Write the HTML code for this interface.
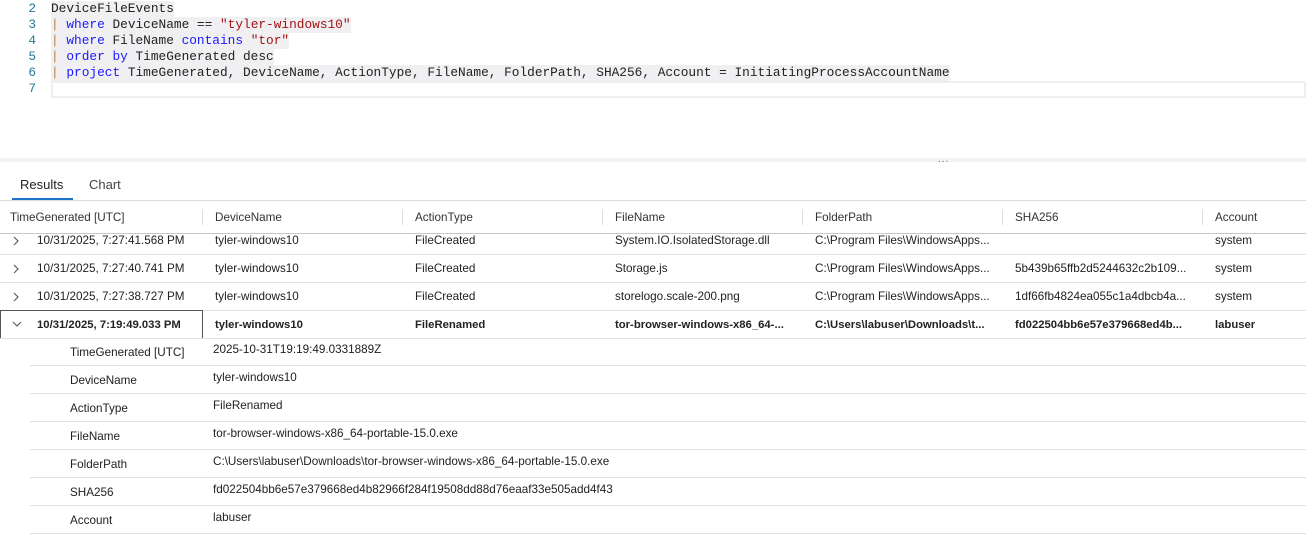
<!DOCTYPE html>
<html><head><meta charset="utf-8"><style>
*{margin:0;padding:0;box-sizing:border-box}
body{width:1306px;height:538px;overflow:hidden;background:#fff;position:relative;font-family:"Liberation Sans",sans-serif;font-size:11.7px;color:#222}
.a{position:absolute;white-space:nowrap}
.code{font-family:"Liberation Mono",monospace;font-size:12.8px;line-height:16px}
.ln{color:#237893;width:36px;text-align:right}
.hl{background:#f0eff1}
.kw{color:#1a1aff}.st{color:#a31515}.bar{color:#c07b3e}
.hr{position:absolute;height:1px;background:#e1e1e1}
.hd{color:#333}
.vs{position:absolute;width:1px;background:#ddd;top:209px;height:16px}
b{font-weight:bold;font-size:11.3px}
</style></head><body>
<div class="a code ln" style="left:0;top:1px">2</div>
<div class="a code ln" style="left:0;top:17px">3</div>
<div class="a code ln" style="left:0;top:33px">4</div>
<div class="a code ln" style="left:0;top:49px">5</div>
<div class="a code ln" style="left:0;top:65px">6</div>
<div class="a code ln" style="left:0;top:81px">7</div>
<div class="a code hl" style="left:51px;top:1px">DeviceFileEvents</div>
<div class="a code hl" style="left:51px;top:17px"><span class="bar">|</span> <span class="kw">where</span> DeviceName == <span class="st">"tyler-windows10"</span></div>
<div class="a code hl" style="left:51px;top:33px"><span class="bar">|</span> <span class="kw">where</span> FileName <span class="kw">contains</span> <span class="st">"tor"</span></div>
<div class="a code hl" style="left:51px;top:49px"><span class="bar">|</span> <span class="kw">order by</span> TimeGenerated desc</div>
<div class="a code hl" style="left:51px;top:65px"><span class="bar">|</span> <span class="kw">project</span> TimeGenerated, DeviceName, ActionType, FileName, FolderPath, SHA256, Account = InitiatingProcessAccountName</div>
<div class="a" style="left:51px;top:81px;width:1255px;height:17px;border:2px solid #eeeeee"></div>
<div class="a" style="left:0;top:158px;width:1306px;height:4px;background:#f3f3f3"></div>
<div class="a" style="left:938px;top:154px;color:#666;font-size:10px;letter-spacing:1px">...</div>
<div class="a" style="left:20px;top:177px;font-size:13px;color:#222">Results</div>
<div class="a" style="left:89px;top:177px;font-size:13px;color:#444">Chart</div>
<div class="a" style="left:12px;top:198px;width:61px;height:2px;background:#1a73c8"></div>
<div class="hr" style="left:0;top:200px;width:1306px;background:#dcdcdc"></div>
<div class="a hd" style="left:10px;top:211px">TimeGenerated [UTC]</div>
<div class="a hd" style="left:215px;top:211px">DeviceName</div>
<div class="a hd" style="left:415px;top:211px">ActionType</div>
<div class="a hd" style="left:615px;top:211px">FileName</div>
<div class="a hd" style="left:815px;top:211px">FolderPath</div>
<div class="a hd" style="left:1015px;top:211px">SHA256</div>
<div class="a hd" style="left:1215px;top:211px">Account</div>
<div class="vs" style="left:202px"></div><div class="vs" style="left:402px"></div><div class="vs" style="left:602px"></div><div class="vs" style="left:802px"></div><div class="vs" style="left:1002px"></div><div class="vs" style="left:1202px"></div>
<div class="hr" style="left:0;top:233px;width:1306px;background:#c8c8c8"></div>

<svg class="a" style="left:13px;top:236px" width="7" height="10"><path d="M1 1 L5 5 L1 9" stroke="#555" fill="none" stroke-width="1.1"/></svg>
<div class="a" style="left:37px;top:234px">10/31/2025, 7:27:41.568 PM</div><div class="a" style="left:215px;top:234px">tyler-windows10</div><div class="a" style="left:415px;top:234px">FileCreated</div><div class="a" style="left:615px;top:234px">System.IO.IsolatedStorage.dll</div><div class="a" style="left:815px;top:234px">C:\Program Files\WindowsApps...</div><div class="a" style="left:1215px;top:234px">system</div>
<div class="hr" style="left:0;top:254px;width:1306px"></div>
<svg class="a" style="left:13px;top:264px" width="7" height="10"><path d="M1 1 L5 5 L1 9" stroke="#555" fill="none" stroke-width="1.1"/></svg>
<div class="a" style="left:37px;top:262px">10/31/2025, 7:27:40.741 PM</div><div class="a" style="left:215px;top:262px">tyler-windows10</div><div class="a" style="left:415px;top:262px">FileCreated</div><div class="a" style="left:615px;top:262px">Storage.js</div><div class="a" style="left:815px;top:262px">C:\Program Files\WindowsApps...</div><div class="a" style="left:1015px;top:262px">5b439b65ffb2d5244632c2b109...</div><div class="a" style="left:1215px;top:262px">system</div>
<div class="hr" style="left:0;top:282px;width:1306px"></div>
<svg class="a" style="left:13px;top:292px" width="7" height="10"><path d="M1 1 L5 5 L1 9" stroke="#555" fill="none" stroke-width="1.1"/></svg>
<div class="a" style="left:37px;top:290px">10/31/2025, 7:27:38.727 PM</div><div class="a" style="left:215px;top:290px">tyler-windows10</div><div class="a" style="left:415px;top:290px">FileCreated</div><div class="a" style="left:615px;top:290px">storelogo.scale-200.png</div><div class="a" style="left:815px;top:290px">C:\Program Files\WindowsApps...</div><div class="a" style="left:1015px;top:290px">1df66fb4824ea055c1a4dbcb4a...</div><div class="a" style="left:1215px;top:290px">system</div>
<div class="hr" style="left:0;top:310px;width:1306px"></div>
<div class="a" style="left:0;top:310px;width:203px;height:29px;border:1px solid #555"></div>
<svg class="a" style="left:12px;top:321px" width="10" height="7"><path d="M1 1 L5 5 L9 1" stroke="#555" fill="none" stroke-width="1.1"/></svg>
<div class="a" style="left:37px;top:318px"><b>10/31/2025, 7:19:49.033 PM</b></div><div class="a" style="left:215px;top:318px"><b>tyler-windows10</b></div><div class="a" style="left:415px;top:318px"><b>FileRenamed</b></div><div class="a" style="left:615px;top:318px"><b>tor-browser-windows-x86_64-...</b></div><div class="a" style="left:815px;top:318px"><b>C:\Users\labuser\Downloads\t...</b></div><div class="a" style="left:1015px;top:318px"><b>fd022504bb6e57e379668ed4b...</b></div><div class="a" style="left:1215px;top:318px"><b>labuser</b></div>
<div class="hr" style="left:0;top:338px;width:1306px"></div>

<div class="a" style="left:70px;top:346px">TimeGenerated [UTC]</div><div class="a" style="left:213px;top:343px">2025-10-31T19:19:49.0331889Z</div>
<div class="hr" style="left:30px;top:365px;width:1276px"></div>
<div class="a" style="left:70px;top:374px">DeviceName</div><div class="a" style="left:213px;top:371px">tyler-windows10</div>
<div class="hr" style="left:30px;top:393px;width:1276px"></div>
<div class="a" style="left:70px;top:402px">ActionType</div><div class="a" style="left:213px;top:399px">FileRenamed</div>
<div class="hr" style="left:30px;top:421px;width:1276px"></div>
<div class="a" style="left:70px;top:430px">FileName</div><div class="a" style="left:213px;top:427px">tor-browser-windows-x86_64-portable-15.0.exe</div>
<div class="hr" style="left:30px;top:449px;width:1276px"></div>
<div class="a" style="left:70px;top:458px">FolderPath</div><div class="a" style="left:213px;top:455px">C:\Users\labuser\Downloads\tor-browser-windows-x86_64-portable-15.0.exe</div>
<div class="hr" style="left:30px;top:477px;width:1276px"></div>
<div class="a" style="left:70px;top:486px">SHA256</div><div class="a" style="left:213px;top:483px">fd022504bb6e57e379668ed4b82966f284f19508dd88d76eaaf33e505add4f43</div>
<div class="hr" style="left:30px;top:505px;width:1276px"></div>
<div class="a" style="left:70px;top:514px">Account</div><div class="a" style="left:213px;top:511px">labuser</div>
<div class="hr" style="left:30px;top:533px;width:1276px"></div>
</body></html>
